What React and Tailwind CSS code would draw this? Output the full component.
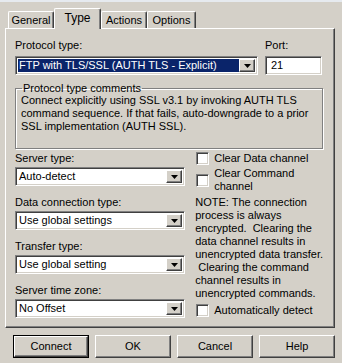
import React from 'react';

const sunken =
  'bg-white border border-t-[#808080] border-l-[#808080] border-b-white border-r-white shadow-[inset_1px_1px_0_#404040,inset_-1px_-1px_0_#d4d0c8]';

const raised =
  'bg-[#d4d0c8] border border-t-white border-l-white border-b-[#404040] border-r-[#404040] shadow-[inset_-1px_-1px_0_#808080]';

const DropButton = () => (
  <div className={`w-[16px] h-full flex items-center justify-center ${raised}`}>
    <svg width="7" height="4" viewBox="0 0 7 4">
      <path d="M0 0h7L3.5 4z" fill="#000" />
    </svg>
  </div>
);

const Select = ({ value, highlight }) => (
  <div className={`flex h-[19px] w-full p-[2px] ${sunken}`}>
    <div className={`flex-1 flex items-center pl-[1px] leading-none ${highlight ? 'bg-[#0a246a] text-white' : 'text-black'}`}>
      {value}
    </div>
    <DropButton />
  </div>
);

const Field = ({ label, value }) => (
  <div className="flex flex-col">
    <div className="h-[13px] leading-[13px] mb-[2px]">{label}</div>
    <Select value={value} />
  </div>
);

const Checkbox = () => (
  <div className={`w-[13px] h-[13px] shrink-0 ${sunken}`} />
);

const Tab = ({ label, active, width }) =>
  active ? (
    <div className={`relative z-10 h-[21px] ${width} bg-[#d4d0c8] border-t border-l border-r border-t-white border-l-white border-r-[#404040] rounded-t-[2px] shadow-[inset_-1px_0_0_#808080] flex justify-center pt-[3px] leading-[13px] text-[12px]`}>
      {label}
    </div>
  ) : (
    <div className={`h-[17px] mb-[1px] ${width} border-t border-l border-r border-t-white border-l-white border-r-[#404040] rounded-t-[2px] shadow-[inset_-1px_0_0_#808080] flex justify-center pt-[2px] leading-[13px]`}>
      {label}
    </div>
  );

const Button = ({ label, isDefault }) =>
  isDefault ? (
    <div className="w-[76px] h-[23px] border border-black">
      <div className={`w-full h-full flex items-center justify-center ${raised}`}>{label}</div>
    </div>
  ) : (
    <div className={`w-[76px] h-[23px] flex items-center justify-center ${raised}`}>{label}</div>
  );

const noteLines = [
  'NOTE: The connection',
  'process is always',
  'encrypted.  Clearing the',
  'data channel results in',
  'unencrypted data transfer.',
  ' Clearing the command',
  'channel results in',
  'unencrypted commands.',
];

export default function App() {
  return (
    <div
      className="w-[342px] h-[363px] bg-[#d4d0c8] text-black text-[11px] overflow-hidden"
      style={{ fontFamily: '"Liberation Sans", Arial, sans-serif' }}
    >
      <div className="h-[2px] bg-[#e6eaef]" />
      <div className="pt-[6px]">
        {/* Tabs */}
        <div className="flex items-end h-[21px] -mb-[1px] pl-[8px]">
          <Tab label="General" width="w-[46px]" />
          <Tab label="Type" width="w-[47px]" active />
          <Tab label="Actions" width="w-[46px]" />
          <Tab label="Options" width="w-[49px]" />
        </div>

        {/* Panel */}
        <div className={`ml-[5px] w-[330px] pt-[10px] pl-[9px] pr-[11px] pb-[9px] ${raised}`}>
          <div className="flex">
            <div className="w-[243px] flex flex-col">
              <div className="h-[13px] leading-[13px] mb-[4px]">Protocol type:</div>
              <Select value="FTP with TLS/SSL (AUTH TLS - Explicit)" highlight />
            </div>
            <div className="ml-[7px] w-[57px] flex flex-col">
              <div className="h-[13px] leading-[13px] mb-[4px]">Port:</div>
              <div className={`h-[19px] flex items-center pl-[5px] ${sunken}`}>21</div>
            </div>
          </div>

          <fieldset className="mt-[8px] pl-[5px] pr-[4px] pb-[15px] border border-[#808080] shadow-[inset_1px_1px_0_#fff,1px_1px_0_#fff]">
            <legend className="ml-[1px] px-[1px] leading-[11px]">Protocol type comments</legend>
            <div className="leading-[13px]">
              <div>Connect explicitly using SSL v3.1 by invoking AUTH TLS</div>
              <div>command sequence. If that fails, auto-downgrade to a prior</div>
              <div>SSL implementation (AUTH SSL).</div>
            </div>
          </fieldset>

          <div className="mt-[3px] flex">
            <div className="w-[171px] flex flex-col gap-[10px]">
              <Field label="Server type:" value="Auto-detect" />
              <Field label="Data connection type:" value="Use global settings" />
              <Field label="Transfer type:" value="Use global setting" />
              <Field label="Server time zone:" value="No Offset" />
            </div>

            <div className="ml-[10px] flex-1 flex flex-col leading-[13px]">
              <div className="flex items-center h-[13px] pl-[1px]">
                <Checkbox />
                <span className="ml-[5px]">Clear Data channel</span>
              </div>
              <div className="flex items-center mt-[2px] pl-[1px]">
                <Checkbox />
                <div className="ml-[5px]">
                  <div>Clear Command</div>
                  <div>channel</div>
                </div>
              </div>
              <div className="mt-[3px]">
                {noteLines.map((line) => (
                  <div key={line} className="whitespace-pre">{line}</div>
                ))}
              </div>
              <div className="flex items-center h-[13px] mt-[4px] pl-[1px]">
                <Checkbox />
                <span className="ml-[5px]">Automatically detect</span>
              </div>
            </div>
          </div>
        </div>

        {/* Buttons */}
        <div className="mt-[7px] pl-[13px] flex gap-[6px]">
          <Button label="Connect" isDefault />
          <Button label="OK" />
          <Button label="Cancel" />
          <Button label="Help" />
        </div>
      </div>
    </div>
  );
}
